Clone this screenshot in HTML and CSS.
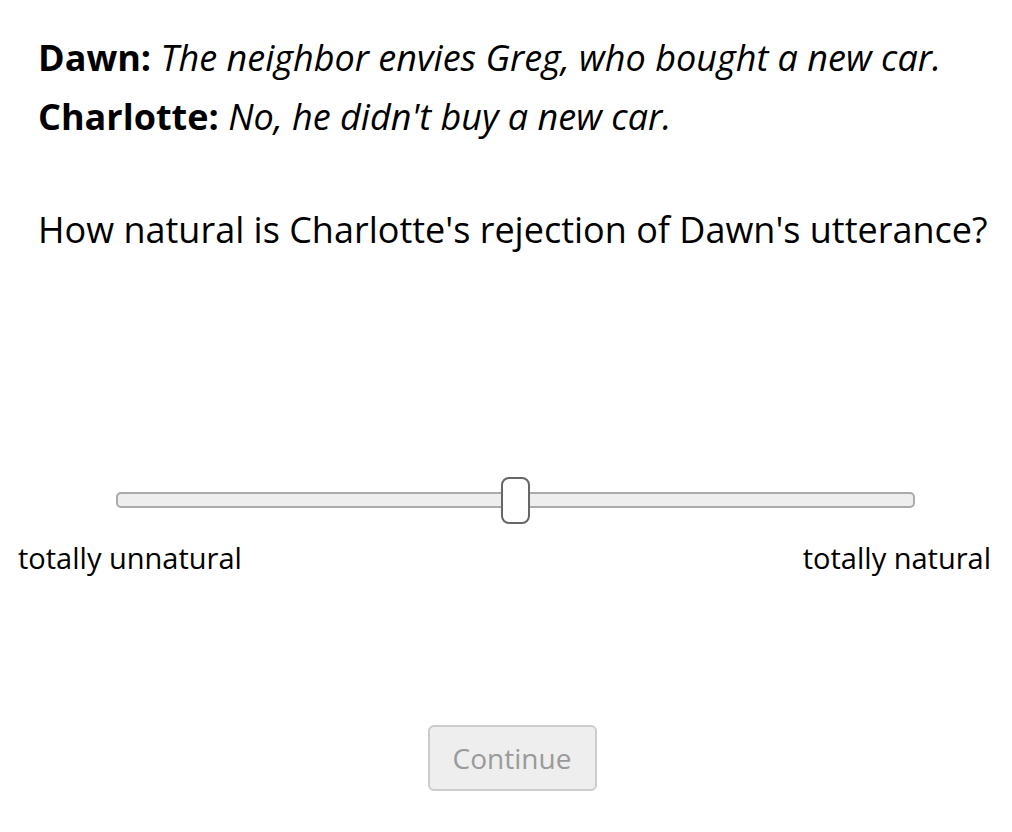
FILE: index.html
```html
<!DOCTYPE html>
<html>
<head>
<meta charset="utf-8">
<link rel="stylesheet" href="styles.css">
</head>
<body>
<div class="page">
  <div class="dialogue">
    <p class="line"><b>Dawn:</b> <i>The neighbor envies Greg, who bought a new car.</i></p>
    <p class="line"><b>Charlotte:</b> <i>No, he didn't buy a new car.</i></p>
  </div>
  <p class="question">How natural is Charlotte's rejection of Dawn's utterance?</p>
  <div class="slider-wrap">
    <div class="slider">
      <div class="track"></div>
      <div class="thumb"></div>
    </div>
    <div class="labels">
      <span class="label">totally unnatural</span>
      <span class="label">totally natural</span>
    </div>
  </div>
  <div class="actions">
    <button class="continue" disabled>Continue</button>
  </div>
</div>
</body>
</html>
```
FILE: styles.css
```css
html, body {
  margin: 0;
  padding: 0;
  background: #fff;
}
body {
  font-family: "Open Sans", sans-serif;
  color: #000;
}
.page {
  width: 1012px;
  display: flex;
  flex-direction: column;
}
.dialogue {
  padding: 28px 0 0 38px;
}
.line {
  margin: 0;
  font-size: 36px;
  line-height: 59px;
  white-space: nowrap;
}
.line b {
  font-weight: 700;
}
.question {
  margin: 57px 0 0 38px;
  font-size: 36px;
  line-height: 54px;
  white-space: nowrap;
}
.slider-wrap {
  margin-top: 219px;
  display: flex;
  flex-direction: column;
}
.slider {
  position: relative;
  margin: 0 97px 0 116px;
  height: 48px;
  display: flex;
  align-items: center;
}
.track {
  flex: 1;
  height: 12px;
  background: #eee;
  border: 2px solid #aaa;
  border-radius: 5px;
}
.thumb {
  position: absolute;
  left: 385px;
  top: 1px;
  width: 25px;
  height: 43px;
  background: #fff;
  border: 2px solid #666;
  border-radius: 8px;
}
.labels {
  display: flex;
  justify-content: space-between;
  padding: 0 21px 0 18px;
  margin-top: 14px;
}
.label {
  font-size: 29px;
  line-height: 40px;
}
.actions {
  display: flex;
  justify-content: center;
  padding-left: 12px;
  margin-top: 147px;
}
.continue {
  width: 169px;
  height: 66px;
  font-family: "Open Sans", sans-serif;
  font-size: 28px;
  color: #9a9a9a;
  background: #eee;
  border: 2px solid #ccc;
  border-radius: 6px;
  padding: 0;
}
```
